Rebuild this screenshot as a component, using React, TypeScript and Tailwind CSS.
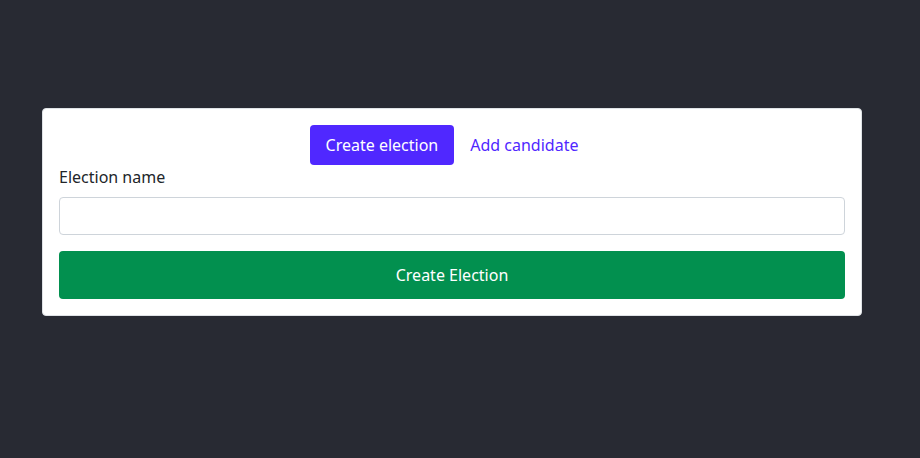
import React, { useState } from 'react';

const App: React.FC = () => {
  const [tab, setTab] = useState<'election' | 'candidate'>('election');
  const [name, setName] = useState('');

  return (
    <div className="min-h-screen w-full bg-[#282a33] pt-[108px] font-['Noto_Sans',sans-serif]">
      <div className="ml-[42px] w-[820px] rounded-[4px] border border-[#dfe2e6] bg-white p-4">
        {/* tabs */}
        <div className="flex justify-center">
          <button
            onClick={() => setTab('election')}
            className={
              tab === 'election'
                ? 'h-10 rounded-[4px] bg-[#5028ff] px-4 text-base text-white'
                : 'h-10 rounded-[4px] px-4 text-base text-[#5028ff]'
            }
          >
            Create election
          </button>
          <button
            onClick={() => setTab('candidate')}
            className={
              tab === 'candidate'
                ? 'h-10 rounded-[4px] bg-[#5028ff] px-4 text-base text-white'
                : 'h-10 rounded-[4px] px-4 text-base text-[#5028ff]'
            }
          >
            Add candidate
          </button>
        </div>

        <label className="mb-2 block text-base leading-6 text-[#212529]">Election name</label>
        <input
          type="text"
          value={name}
          onChange={(e) => setName(e.target.value)}
          className="block h-[38px] w-full rounded-[4px] border border-[#ced4da] px-3 text-base text-[#212529] focus:outline-none"
        />
        <button className="mt-4 h-12 w-full rounded-[4px] bg-[#02904f] text-base text-white">
          Create Election
        </button>
      </div>
    </div>
  );
};

export default App;
